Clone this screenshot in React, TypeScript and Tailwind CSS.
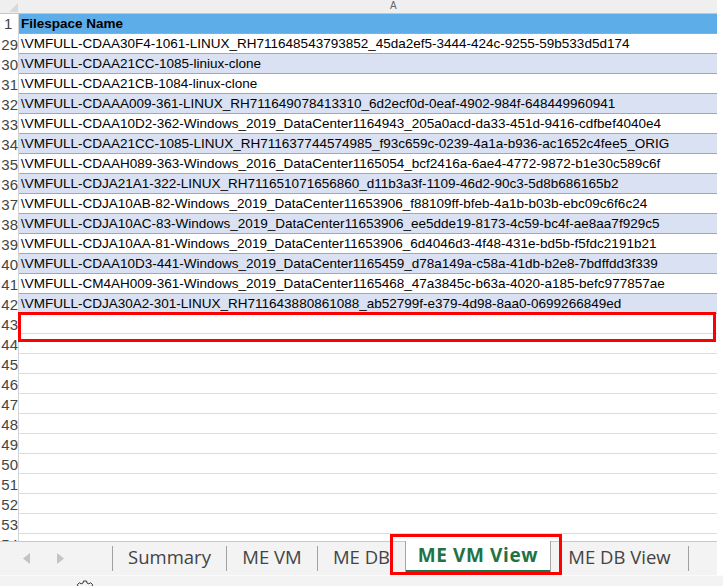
import React from "react";

const rows: [number, string][] = [
  [29, "\\VMFULL-CDAA30F4-1061-LINUX_RH711648543793852_45da2ef5-3444-424c-9255-59b533d5d174"],
  [30, "\\VMFULL-CDAA21CC-1085-liniux-clone"],
  [31, "\\VMFULL-CDAA21CB-1084-linux-clone"],
  [32, "\\VMFULL-CDAAA009-361-LINUX_RH711649078413310_6d2ecf0d-0eaf-4902-984f-648449960941"],
  [33, "\\VMFULL-CDAA10D2-362-Windows_2019_DataCenter1164943_205a0acd-da33-451d-9416-cdfbef4040e4"],
  [34, "\\VMFULL-CDAA21CC-1085-LINUX_RH711637744574985_f93c659c-0239-4a1a-b936-ac1652c4fee5_ORIG"],
  [35, "\\VMFULL-CDAAH089-363-Windows_2016_DataCenter1165054_bcf2416a-6ae4-4772-9872-b1e30c589c6f"],
  [36, "\\VMFULL-CDJA21A1-322-LINUX_RH711651071656860_d11b3a3f-1109-46d2-90c3-5d8b686165b2"],
  [37, "\\VMFULL-CDJA10AB-82-Windows_2019_DataCenter11653906_f88109ff-bfeb-4a1b-b03b-ebc09c6f6c24"],
  [38, "\\VMFULL-CDJA10AC-83-Windows_2019_DataCenter11653906_ee5dde19-8173-4c59-bc4f-ae8aa7f929c5"],
  [39, "\\VMFULL-CDJA10AA-81-Windows_2019_DataCenter11653906_6d4046d3-4f48-431e-bd5b-f5fdc2191b21"],
  [40, "\\VMFULL-CDAA10D3-441-Windows_2019_DataCenter1165459_d78a149a-c58a-41db-b2e8-7bdffdd3f339"],
  [41, "\\VMFULL-CM4AH009-361-Windows_2019_DataCenter1165468_47a3845c-b63a-4020-a185-befc977857ae"],
  [42, "\\VMFULL-CDJA30A2-301-LINUX_RH711643880861088_ab52799f-e379-4d98-8aa0-0699266849ed"],
];

const emptyRows = [43, 44, 45, 46, 47, 48, 49, 50, 51, 52, 53];

function RowNum({ n }: { n: number }) {
  return (
    <div className="w-[19px] shrink-0 border-r border-[#d4d4d4] overflow-hidden relative text-[#444] text-[15px]">
      <span className="absolute right-[0px] top-[1px] leading-[19px]">{n}</span>
    </div>
  );
}

export default function App() {
  return (
    <div
      className="w-[723px] h-[586px] bg-white overflow-hidden relative"
      style={{ fontFamily: "'Liberation Sans', Arial, sans-serif" }}
    >
      <div className="w-[717px] h-[541px] overflow-hidden text-[13.5px]">
        {/* column header */}
        <div className="flex h-[14px] bg-[#efefef] border-b border-[#c6c6c6]">
          <div className="w-[20px] shrink-0 relative">
            <div className="absolute right-[2px] bottom-[1px] w-0 h-0 border-l-[9px] border-l-transparent border-b-[9px] border-b-[#d9d9d9]" />
          </div>
          <div className="flex-1 relative overflow-hidden">
            <span className="absolute left-[370px] top-[0px] text-[10px] leading-[11px] text-[#666]">A</span>
          </div>
        </div>
        {/* row 1 */}
        <div className="flex h-[20px]">
          <div className="w-[19px] shrink-0 border-r border-[#d4d4d4] text-[#444] text-[15px] pl-[4px] leading-[20px]">1</div>
          <div className="flex-1 bg-[#5dade9] border-b border-[#8eaadb] pl-[2px] font-bold leading-[20px] text-black">
            Filespace Name
          </div>
        </div>
        {rows.map(([n, t]) => (
          <div key={n} className="flex h-[20px]">
            <RowNum n={n} />
            <div
              className={`flex-1 border-b border-[#8eaadb] pl-[2px] leading-[20px] text-black whitespace-nowrap overflow-hidden ${
                n % 2 === 0 ? "bg-[#d9e1f2]" : "bg-white"
              }`}
            >
              {t}
            </div>
          </div>
        ))}
        {emptyRows.map((n) => (
          <div key={n} className="flex h-[20px]">
            <RowNum n={n} />
            <div className="flex-1 border-b border-[#dcdcdc]" />
          </div>
        ))}
        <div className="flex h-[20px]">
          <RowNum n={54} />
          <div className="flex-1" />
        </div>
      </div>
      {/* tab bar */}
      <div
        className="w-[717px] h-[34px] bg-[#f3f3f3] border-t border-[#c8c8c8] flex items-stretch text-[#444]"
        style={{ fontFamily: "'Open Sans', 'Noto Sans', sans-serif" }}
      >
        <div className="w-[112px] shrink-0 flex items-center pl-[23px] gap-[27px]">
          <svg width="7" height="11" viewBox="0 0 7 11"><path d="M7 0 L0 5.5 L7 11 Z" fill="#c4c4c4" /></svg>
          <svg width="7" height="11" viewBox="0 0 7 11"><path d="M0 0 L7 5.5 L0 11 Z" fill="#c4c4c4" /></svg>
        </div>
        <div className="w-px bg-[#a0a0a0] my-[4px]" />
        <div className="w-[113px] flex items-center justify-center text-[18.5px] pb-[3px]">Summary</div>
        <div className="w-px bg-[#a0a0a0] my-[4px]" />
        <div className="w-[90px] flex items-center justify-center text-[18.5px] pb-[3px]">ME VM</div>
        <div className="w-px bg-[#a0a0a0] my-[4px]" />
        <div className="w-[87px] flex items-center justify-center text-[18.5px] pb-[3px]">ME DB</div>
        <div className="w-[146px] -mt-px bg-white border-x border-[#a6a6a6] flex flex-col">
          <div className="flex-1 flex items-center justify-center text-[19px] tracking-[0.6px] font-bold text-[#217346]">ME VM View</div>
          <div className="h-[3px] bg-[#217346] mb-[3px]" />
        </div>
        <div className="w-[137px] flex items-center justify-center text-[18.5px] pb-[3px]">ME DB View</div>
        <div className="w-px bg-[#a0a0a0] my-[4px]" />
      </div>
      {/* status strip */}
      <div className="w-[723px] h-[11px] bg-[#f3f3f3] border-t border-[#fafafa] relative overflow-hidden">
        <svg className="absolute left-[76px] top-[4px]" width="18" height="18" viewBox="0 0 18 18">
          <path
            d="M7.5 1 h3 l0.5 2 l1.8 0.8 l1.8-1.1 l2.1 2.1 l-1.1 1.8 l0.8 1.8 l2 0.5 v3 l-2 0.5 l-0.8 1.8 l1.1 1.8 l-2.1 2.1 l-1.8-1.1 l-1.8 0.8 l-0.5 2 h-3 l-0.5-2 l-1.8-0.8 l-1.8 1.1 l-2.1-2.1 l1.1-1.8 l-0.8-1.8 l-2-0.5 v-3 l2-0.5 l0.8-1.8 l-1.1-1.8 l2.1-2.1 l1.8 1.1 l1.8-0.8 Z"
            fill="none"
            stroke="#333"
            strokeWidth="1"
          />
        </svg>
      </div>
      {/* red highlight boxes */}
      <div className="absolute left-[18px] top-[312px] w-[698px] h-[30px] border-[3px] border-[#ff0000]" />
      <div className="absolute left-[390px] top-[534px] w-[172px] h-[41px] border-[3px] border-[#ff0000]" />
    </div>
  );
}
